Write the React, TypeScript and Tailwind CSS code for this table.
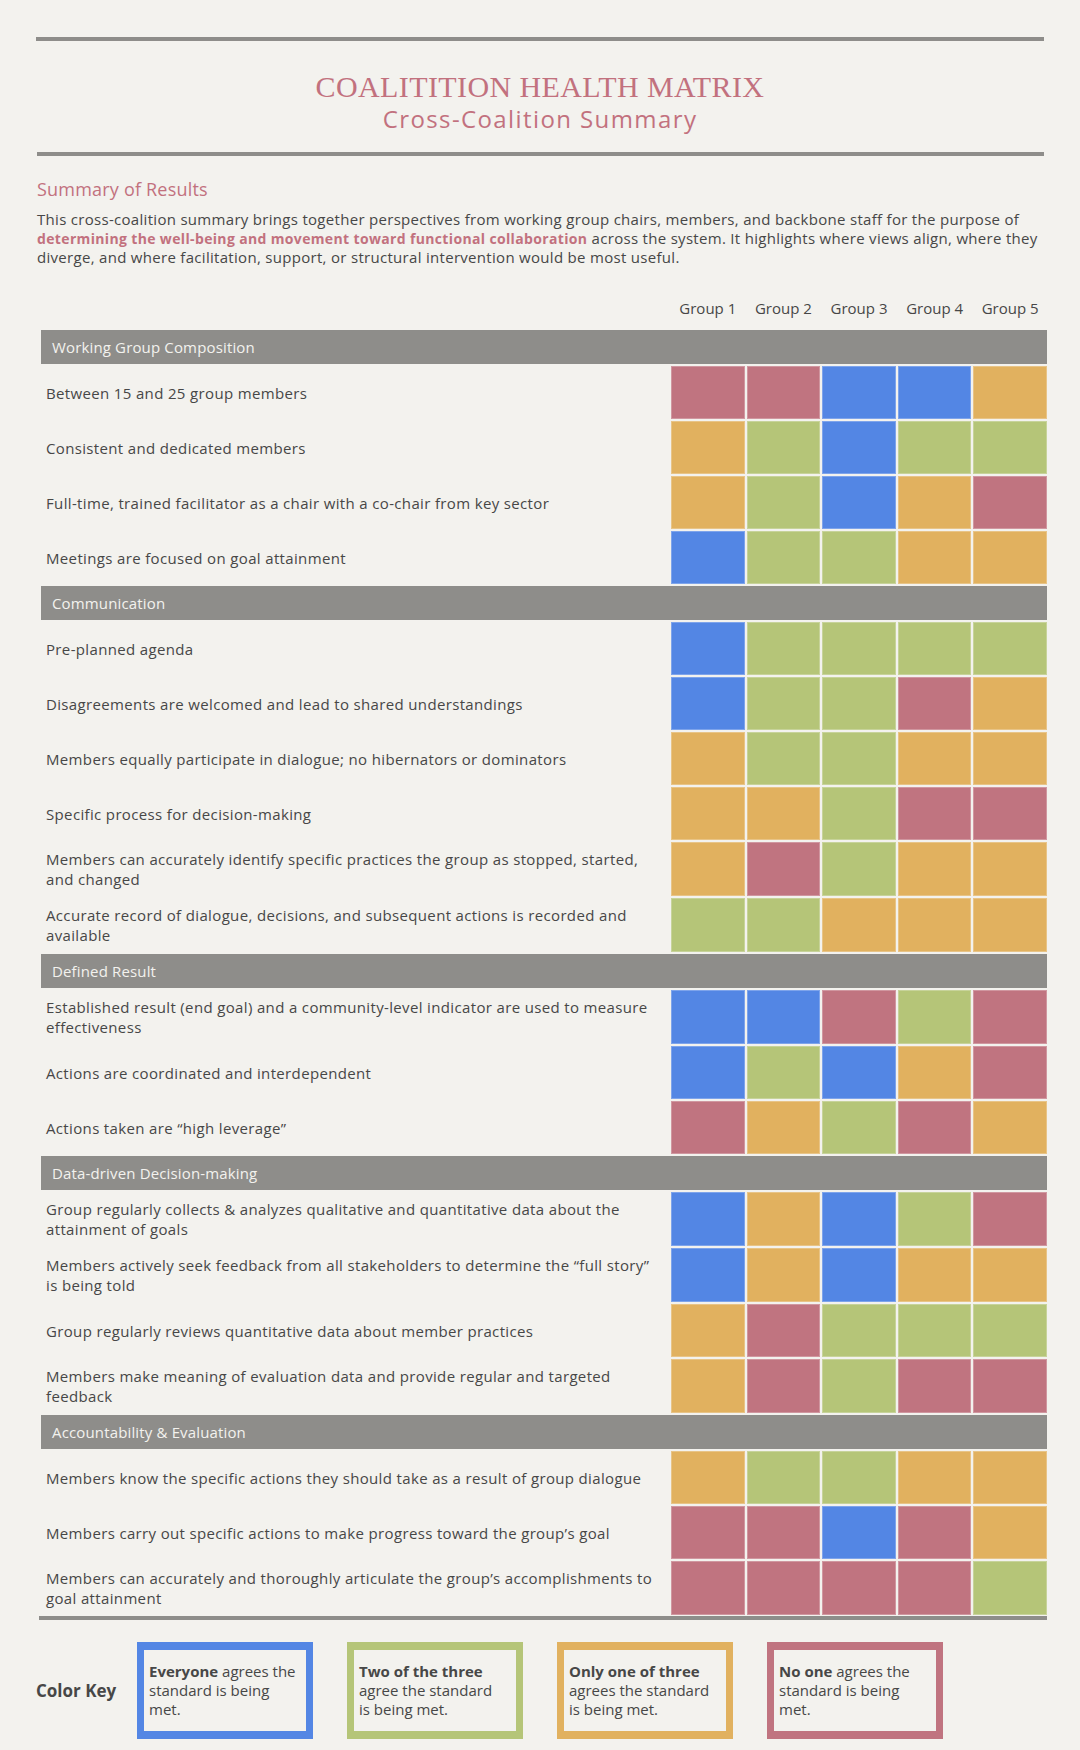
import React from "react";

const COLORS: Record<string, string> = {
  B: "bg-[#5386e4]",
  G: "bg-[#b5c578]",
  O: "bg-[#e1b15f]",
  R: "bg-[#c07480]",
};

type RowDef = { label: string[]; cells: string };
type Section = { title: string; rows: RowDef[] };

const sections: Section[] = [
  {
    title: "Working Group Composition",
    rows: [
      { label: ["Between 15 and 25 group members"], cells: "RRBBO" },
      { label: ["Consistent and dedicated members"], cells: "OGBGG" },
      { label: ["Full-time, trained facilitator as a chair with a co-chair from key sector"], cells: "OGBOR" },
      { label: ["Meetings are focused on goal attainment"], cells: "BGGOO" },
    ],
  },
  {
    title: "Communication",
    rows: [
      { label: ["Pre-planned agenda"], cells: "BGGGG" },
      { label: ["Disagreements are welcomed and lead to shared understandings"], cells: "BGGRO" },
      { label: ["Members equally participate in dialogue; no hibernators or dominators"], cells: "OGGOO" },
      { label: ["Specific process for decision-making"], cells: "OOGRR" },
      {
        label: ["Members can accurately identify specific practices the group as stopped, started,", "and changed"],
        cells: "ORGOO",
      },
      {
        label: ["Accurate record of dialogue, decisions, and subsequent actions is recorded and", "available"],
        cells: "GGOOO",
      },
    ],
  },
  {
    title: "Defined Result",
    rows: [
      {
        label: ["Established result (end goal) and a community-level indicator are used to measure", "effectiveness"],
        cells: "BBRGR",
      },
      { label: ["Actions are coordinated and interdependent"], cells: "BGBOR" },
      { label: ["Actions taken are \u201chigh leverage\u201d"], cells: "ROGRO" },
    ],
  },
  {
    title: "Data-driven Decision-making",
    rows: [
      {
        label: ["Group regularly collects & analyzes qualitative and quantitative data about the", "attainment of goals"],
        cells: "BOBGR",
      },
      {
        label: ["Members actively seek feedback from all stakeholders to determine the \u201cfull story\u201d", "is being told"],
        cells: "BOBOO",
      },
      { label: ["Group regularly reviews quantitative data about member practices"], cells: "ORGGG" },
      {
        label: ["Members make meaning of evaluation data and provide regular and targeted", "feedback"],
        cells: "ORGRR",
      },
    ],
  },
  {
    title: "Accountability & Evaluation",
    rows: [
      { label: ["Members know the specific actions they should take as a result of group dialogue"], cells: "OGGOO" },
      { label: ["Members carry out specific actions to make progress toward the group\u2019s goal"], cells: "RRBRO" },
      {
        label: ["Members can accurately and thoroughly articulate the group\u2019s accomplishments to", "goal attainment"],
        cells: "RRRRG",
      },
    ],
  },
];

const keys = [
  { border: "border-[#5386e4]", bold: "Everyone", lines: [" agrees the", "standard is being", "met."] },
  { border: "border-[#b5c578]", bold: "Two of the three", lines: ["", "agree the standard", "is being met."] },
  { border: "border-[#e1b15f]", bold: "Only one of three", lines: ["", "agrees the standard", "is being met."] },
  { border: "border-[#c07480]", bold: "No one", lines: [" agrees the", "standard is being", "met."] },
];

export default function App() {
  return (
    <div
      className="w-[1080px] min-h-[1750px] bg-[#f3f2ee] px-[36px] pt-[37px] text-[#474747]"
      style={{ fontFamily: '"Open Sans", "Noto Sans", sans-serif' }}
    >
      <div className="h-[4px] w-[1008px] bg-[#8e8d8a]" />
      <div
        className="mt-[28px] text-center text-[30px] leading-[36px] tracking-[0.4px] text-[#c2717e]"
        style={{ fontFamily: '"Liberation Serif", serif' }}
      >
        COALITITION HEALTH MATRIX
      </div>
      <div className="text-center text-[24px] leading-[28px] font-normal tracking-[1.4px] text-[#c2717e]">
        Cross-Coalition Summary
      </div>
      <div className="ml-[1px] mt-[19px] h-[4px] w-[1007px] bg-[#8e8d8a]" />

      <div className="ml-[1px] mt-[21px] text-[18px] leading-[24px] font-normal tracking-[0.2px] text-[#c2717e]">
        Summary of Results
      </div>
      <p className="ml-[1px] mt-[9px] text-[15px] leading-[19px] tracking-[0.3px]">
        This cross-coalition summary brings together perspectives from working group chairs, members, and backbone
        staff for the purpose of
        <br />
        <span className="text-[14px] font-bold tracking-[0.35px] text-[#c2717e]">
          determining the well-being and movement toward functional collaboration
        </span>{" "}
        across the system. It highlights where views align, where they
        <br />
        diverge, and where facilitation, support, or structural intervention would be most useful.
      </p>

      <div className="ml-[3px] mt-[25px] w-[1008px] border-b-4 border-[#8e8d8a] pb-[1px] pl-[2px]">
        <div className="grid grid-cols-[628px_repeat(5,minmax(0,1fr))] gap-[2px]">
          <div className="h-[36px]" />
          {[1, 2, 3, 4, 5].map((n) => (
            <div key={n} className="flex h-[36px] items-center justify-center pb-[3px] text-[15px]">
              Group {n}
            </div>
          ))}
          {sections.map((s) => (
            <React.Fragment key={s.title}>
              <div className="col-span-6 flex h-[34px] items-center bg-[#8e8d8a] pl-[11px] text-[15px] tracking-[0.15px] text-[#f3f2ee]">
                {s.title}
              </div>
              {s.rows.map((r, i) => (
                <React.Fragment key={i}>
                  <div className="flex min-h-[53px] items-center px-[5px] py-[7px] text-[15px] leading-[20px] tracking-[0.35px]">
                    <span>
                      {r.label.map((l, j) => (
                        <React.Fragment key={j}>
                          {j > 0 && <br />}
                          {l}
                        </React.Fragment>
                      ))}
                    </span>
                  </div>
                  {r.cells.split("").map((c, j) => (
                    <div key={j} className={`${COLORS[c]} border border-white/25`} />
                  ))}
                </React.Fragment>
              ))}
            </React.Fragment>
          ))}
        </div>
      </div>

      <div className="mt-[22px] flex items-center">
        <div className="w-[101px] text-[17px] font-bold text-[#474747]">Color Key</div>
        <div className="flex gap-[34px]">
          {keys.map((k) => (
            <div
              key={k.bold}
              className={`h-[97px] w-[176px] border-x-[7px] border-y-[8px] ${k.border} px-[5px] py-[12px] text-[15px] leading-[19px]`}
            >
              <span className="font-bold">{k.bold}</span>
              {k.lines[0]}
              <br />
              {k.lines[1]}
              <br />
              {k.lines[2]}
            </div>
          ))}
        </div>
      </div>
    </div>
  );
}
